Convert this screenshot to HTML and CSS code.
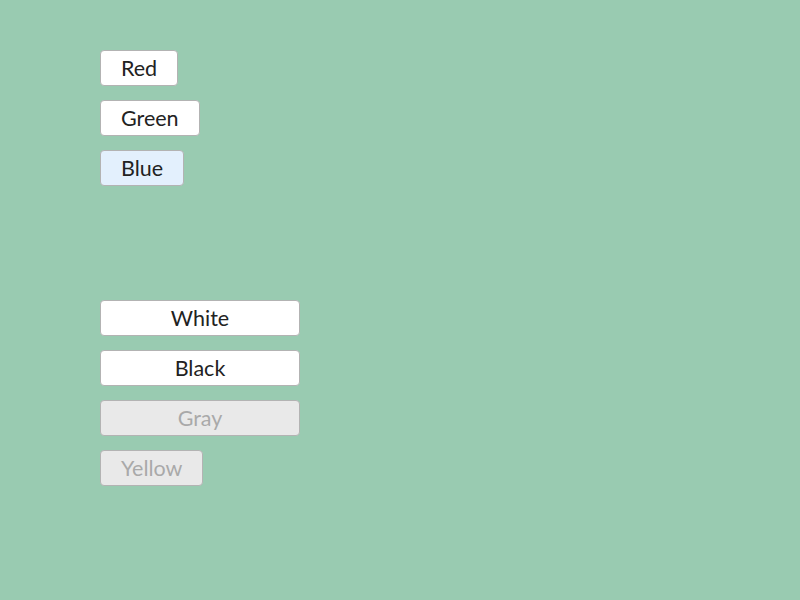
FILE: index.html
```html
<!DOCTYPE html>
<html>
<head>
<meta charset="utf-8">
<link rel="stylesheet" href="styles.css">
</head>
<body>
<div class="page">
  <div class="group">
    <button class="btn">Red</button>
    <button class="btn">Green</button>
    <button class="btn btn-active">Blue</button>
  </div>
  <div class="group group-wide">
    <button class="btn btn-wide">White</button>
    <button class="btn btn-wide">Black</button>
    <button class="btn btn-wide" disabled>Gray</button>
    <button class="btn" disabled>Yellow</button>
  </div>
</div>
</body>
</html>
```
FILE: styles.css
```css
html, body {
  margin: 0;
  padding: 0;
  background: #99cbb1;
  width: 800px;
  height: 600px;
  overflow: hidden;
}
.page {
  padding: 50px 0 0 100px;
  display: flex;
  flex-direction: column;
  gap: 114px;
}
.group {
  display: flex;
  flex-direction: column;
  align-items: flex-start;
  gap: 14px;
}
.btn {
  box-sizing: border-box;
  height: 36px;
  padding: 0 20px;
  margin: 0;
  border: 1px solid #b3b3b3;
  border-radius: 4px;
  background: #ffffff;
  color: #222222;
  font-family: Lato, "Noto Sans", sans-serif;
  font-size: 21.5px;
  line-height: 34px;
}
.btn-active {
  background: #e3f0fd;
}
.btn-wide {
  width: 200px;
  text-align: center;
}
.btn:disabled {
  background: #e9e9e9;
  color: #a9a9a9;
}
```
